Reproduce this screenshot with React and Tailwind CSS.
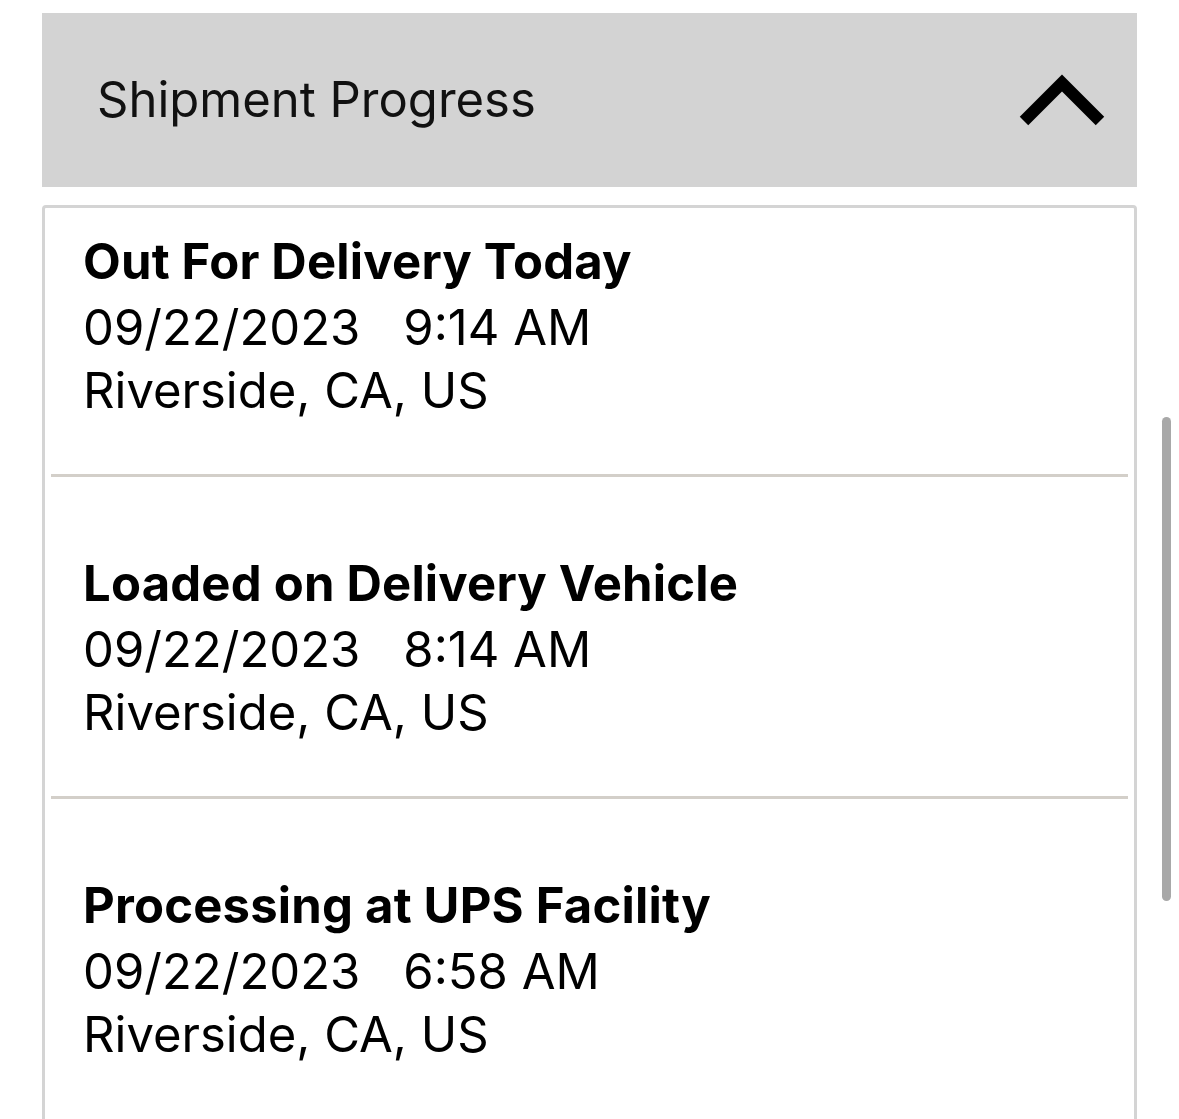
import React from 'react';

const events = [
  { title: 'Out For Delivery Today', date: '09/22/2023', time: '9:14 AM', place: 'Riverside, CA, US' },
  { title: 'Loaded on Delivery Vehicle', date: '09/22/2023', time: '8:14 AM', place: 'Riverside, CA, US' },
  { title: 'Processing at UPS Facility', date: '09/22/2023', time: '6:58 AM', place: 'Riverside, CA, US' },
];

function ChevronUp() {
  return (
    <svg width="86" height="54" viewBox="0 0 86 54" fill="none">
      <polyline points="5,48 43,10 81,48" stroke="#000" strokeWidth="12" strokeLinejoin="miter" strokeLinecap="butt" />
    </svg>
  );
}

function EventRow({ item, first, last }) {
  return (
    <div>
      <div className={`${first ? 'pt-[21px]' : 'pt-[74px]'} pb-[52px] pl-[38px] text-black`}>
        <div className="text-[49px] leading-[66px] font-bold tracking-[0.2px]">{item.title}</div>
        <div className="flex gap-[43px] text-[49px] leading-[65px]">
          <span>{item.date}</span>
          <span>{item.time}</span>
        </div>
        <div className="text-[49px] leading-[62px]">{item.place}</div>
      </div>
      {!last && <div className="mx-[6px] h-[3px] bg-[#d3cfc9]" />}
    </div>
  );
}

export default function App() {
  return (
    <div
      className="relative h-[1119px] w-[1179px] overflow-hidden bg-white"
      style={{ fontFamily: 'Inter, "Liberation Sans", sans-serif' }}
    >
      <div className="mx-[42px] mt-[13px] flex h-[174px] items-center justify-between bg-[#d3d3d3] pl-[55px] pr-[32px]">
        <span className="text-[49px] text-[#111]">Shipment Progress</span>
        <ChevronUp />
      </div>

      <div className="mx-[42px] mt-[18px] h-[1000px] rounded-t-[4px] border-[3px] border-[#d4d4d4]">
        {events.map((e, i) => (
          <EventRow key={e.time} item={e} first={i === 0} last={i === events.length - 1} />
        ))}
      </div>

      {/* scroll indicator */}
      <div className="absolute left-[1162px] top-[417px] h-[484px] w-[9px] rounded-full bg-[#a8a8a8]" />
    </div>
  );
}
